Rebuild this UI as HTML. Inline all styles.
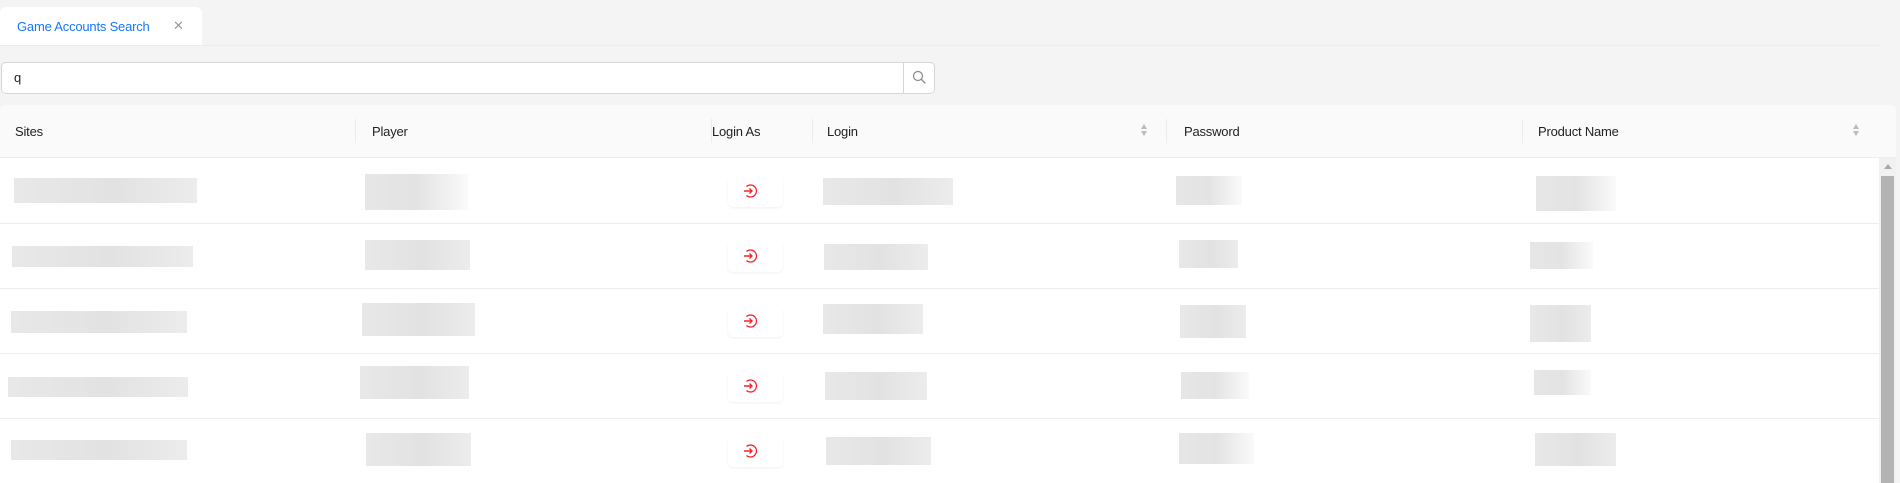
<!DOCTYPE html>
<html><head><meta charset="utf-8"><style>
*{margin:0;padding:0;box-sizing:border-box}
body{width:1900px;height:483px;background:#f4f4f4;font-family:"Liberation Sans",sans-serif;position:relative;overflow:hidden;color:#222}
.a{position:absolute}
.tab{left:0;top:7px;width:202px;height:39px;background:#fff;border-radius:6px 6px 0 0}
.tab span{position:absolute;left:17px;top:12px;font-size:13px;color:#1677ff;letter-spacing:-0.2px}
.tab i{position:absolute;left:173px;top:11px;font-style:normal;font-size:13px;color:#999}
.hl{left:0;top:45px;width:1880px;height:1px;background:#ececec}
.search{left:1px;top:62px;width:934px;height:32px;background:#fff;border:1px solid #d6d6d6;border-radius:5px}
.search span{position:absolute;left:12px;top:7px;font-size:13px}
.search .btn{position:absolute;right:0;top:0;width:31px;height:30px;border-left:1px solid #d6d6d6}
.tbl{left:0;top:105px;width:1896px;height:378px;background:#fff;border-radius:6px 6px 0 0}
.th{left:0;top:105px;width:1896px;height:53px;background:#fafafa;border-bottom:1px solid #eee;border-radius:6px 6px 0 0}
.th span{position:absolute;top:19px;font-size:13px;color:#222;letter-spacing:-0.2px}
.sep{position:absolute;top:14px;width:1px;height:24px;background:#ececec}
.sort{position:absolute;top:17px;width:8px;height:16px}
.rl{left:0;width:1879px;height:1px;background:#eee}
.b{position:absolute;background:linear-gradient(90deg,#e8e8e8,#e2e2e2 55%,#ececec)}
.p{background:linear-gradient(90deg,#e6e6e6,#e3e3e3 50%,#fafafa)}
.ic{position:absolute;width:55px;height:31px;border-radius:5px;box-shadow:0 1px 2px rgba(0,0,0,.06)}
.sb{left:1879px;top:158px;width:17px;height:325px;background:#f1f1f1}
.th2{left:1881px;top:176px;width:13px;height:307px;background:#b3b3b3}
</style></head><body>
<div class="a tab"><span>Game Accounts Search</span><i>✕</i></div>
<div class="a hl"></div>
<div class="a search"><span>q</span><div class="btn"><svg width="31" height="30" viewBox="0 0 31 30"><circle cx="14" cy="13" r="4.5" fill="none" stroke="#888" stroke-width="1.2"/><path d="M17.3 16.3l4 4" stroke="#888" stroke-width="1.3"/></svg></div></div>
<div class="a tbl"></div>
<div class="a th">
<span style="left:15px">Sites</span><span style="left:372px">Player</span><span style="left:712px">Login As</span><span style="left:827px">Login</span><span style="left:1184px">Password</span><span style="left:1538px">Product Name</span>
<div class="sep" style="left:355px"></div><div class="sep" style="left:711px"></div><div class="sep" style="left:812px"></div><div class="sep" style="left:1166px"></div><div class="sep" style="left:1522px"></div>
<svg class="sort" style="left:1140px" viewBox="0 0 8 16"><path d="M4 2L7 7H1z" fill="#bbb"/><path d="M4 14L7 9H1z" fill="#bbb"/></svg>
<svg class="sort" style="left:1852px" viewBox="0 0 8 16"><path d="M4 2L7 7H1z" fill="#bbb"/><path d="M4 14L7 9H1z" fill="#bbb"/></svg>
</div>
<div class="a rl" style="top:223px"></div><div class="a rl" style="top:288px"></div><div class="a rl" style="top:353px"></div><div class="a rl" style="top:418px"></div>
<div class="a sb"></div><div class="a th2"></div>
<svg class="a" style="left:1882px;top:163px" width="12" height="8"><path d="M6 1L10 6H2z" fill="#aaa"/></svg>

<div class="b" style="left:14px;top:178px;width:183px;height:25px"></div>
<div class="b p" style="left:365px;top:174px;width:103px;height:36px"></div>
<div class="b" style="left:823px;top:178px;width:130px;height:27px"></div>
<div class="b p" style="left:1176px;top:176px;width:66px;height:29px"></div>
<div class="b p" style="left:1536px;top:176px;width:80px;height:35px"></div>
<div class="b" style="left:12px;top:246px;width:181px;height:21px"></div>
<div class="b" style="left:365px;top:240px;width:105px;height:30px"></div>
<div class="b" style="left:824px;top:244px;width:104px;height:26px"></div>
<div class="b" style="left:1179px;top:240px;width:59px;height:28px"></div>
<div class="b p" style="left:1530px;top:242px;width:63px;height:27px"></div>
<div class="b" style="left:11px;top:311px;width:176px;height:22px"></div>
<div class="b" style="left:362px;top:303px;width:113px;height:33px"></div>
<div class="b" style="left:823px;top:304px;width:100px;height:30px"></div>
<div class="b" style="left:1180px;top:305px;width:66px;height:33px"></div>
<div class="b" style="left:1530px;top:305px;width:61px;height:37px"></div>
<div class="b" style="left:8px;top:377px;width:180px;height:20px"></div>
<div class="b" style="left:360px;top:366px;width:109px;height:33px"></div>
<div class="b" style="left:825px;top:372px;width:102px;height:28px"></div>
<div class="b p" style="left:1181px;top:372px;width:68px;height:27px"></div>
<div class="b p" style="left:1534px;top:370px;width:57px;height:25px"></div>
<div class="b" style="left:11px;top:440px;width:176px;height:20px"></div>
<div class="b" style="left:366px;top:433px;width:105px;height:33px"></div>
<div class="b" style="left:826px;top:437px;width:105px;height:28px"></div>
<div class="b p" style="left:1179px;top:433px;width:75px;height:31px"></div>
<div class="b" style="left:1535px;top:433px;width:81px;height:33px"></div>

<div class="ic" style="left:728px;top:176px"></div>
<div class="ic" style="left:728px;top:241px"></div>
<div class="ic" style="left:728px;top:306px"></div>
<div class="ic" style="left:728px;top:371px"></div>
<div class="ic" style="left:728px;top:436px"></div>
<svg class="a" style="left:742px;top:183px" width="16" height="16" viewBox="0 0 16 16"><path d="M4.5 3.5A6 6 0 1 1 4.5 12.5" fill="none" stroke="#f5222d" stroke-width="1.2"/><path d="M2 8h8M7.5 5.5L10 8 7.5 10.5" fill="none" stroke="#f5222d" stroke-width="1.4"/></svg>
<svg class="a" style="left:742px;top:248px" width="16" height="16" viewBox="0 0 16 16"><path d="M4.5 3.5A6 6 0 1 1 4.5 12.5" fill="none" stroke="#f5222d" stroke-width="1.2"/><path d="M2 8h8M7.5 5.5L10 8 7.5 10.5" fill="none" stroke="#f5222d" stroke-width="1.4"/></svg>
<svg class="a" style="left:742px;top:313px" width="16" height="16" viewBox="0 0 16 16"><path d="M4.5 3.5A6 6 0 1 1 4.5 12.5" fill="none" stroke="#f5222d" stroke-width="1.2"/><path d="M2 8h8M7.5 5.5L10 8 7.5 10.5" fill="none" stroke="#f5222d" stroke-width="1.4"/></svg>
<svg class="a" style="left:742px;top:378px" width="16" height="16" viewBox="0 0 16 16"><path d="M4.5 3.5A6 6 0 1 1 4.5 12.5" fill="none" stroke="#f5222d" stroke-width="1.2"/><path d="M2 8h8M7.5 5.5L10 8 7.5 10.5" fill="none" stroke="#f5222d" stroke-width="1.4"/></svg>
<svg class="a" style="left:742px;top:443px" width="16" height="16" viewBox="0 0 16 16"><path d="M4.5 3.5A6 6 0 1 1 4.5 12.5" fill="none" stroke="#f5222d" stroke-width="1.2"/><path d="M2 8h8M7.5 5.5L10 8 7.5 10.5" fill="none" stroke="#f5222d" stroke-width="1.4"/></svg>
</body></html>
